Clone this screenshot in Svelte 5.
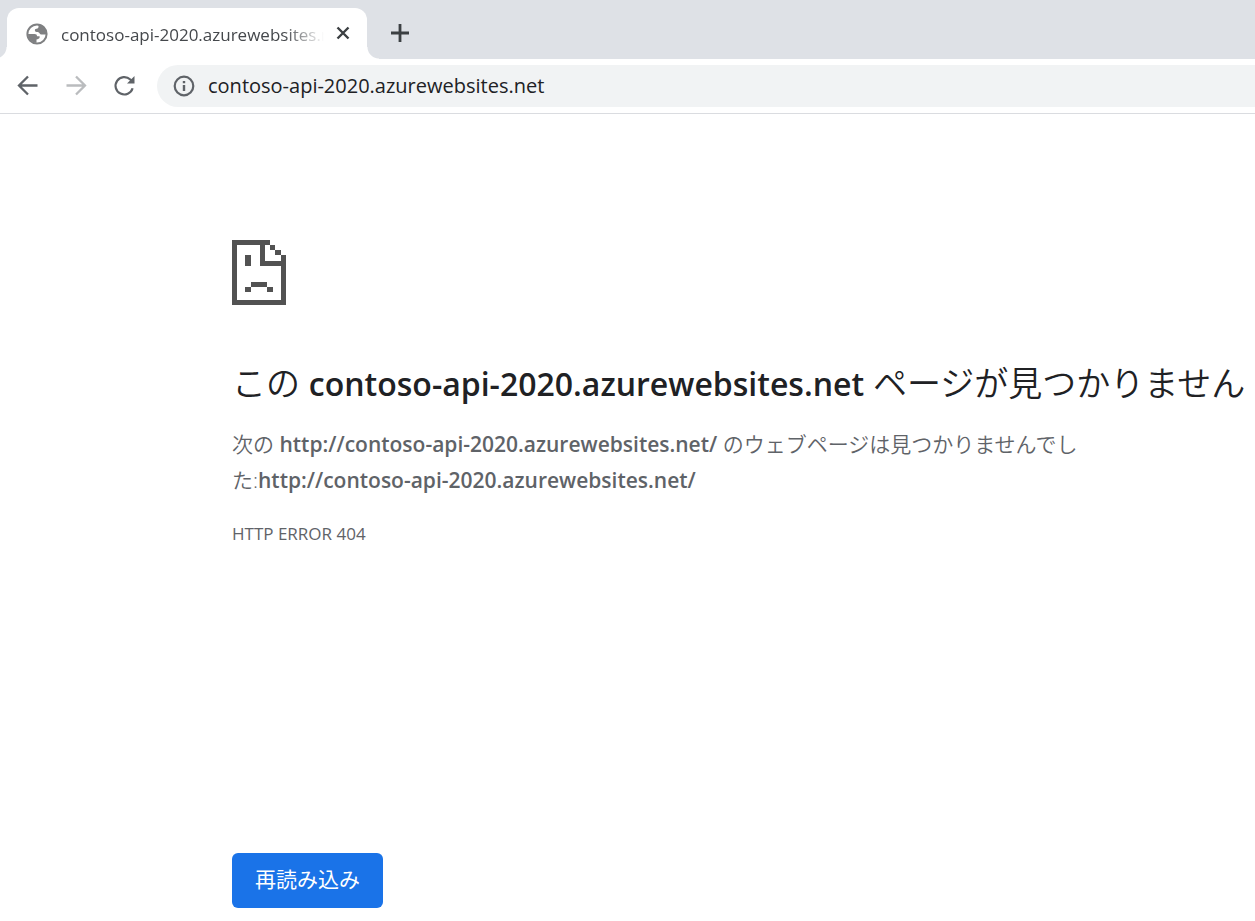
<script>
  const host = 'contoso-api-2020.azurewebsites.net';
  const url = `http://${host}/`;
</script>

<div class="browser">
  <header>
    <div class="tabs">
      <div class="tab">
        <svg class="globe" viewBox="0 0 22 22" fill="#7f8082" aria-hidden="true">
          <circle cx="11" cy="11" r="9.600" fill="#fff" stroke="#7f8082" stroke-width="2" />
          <path d="M2 11h6.500c1.800 0 2.500.9 2.500 2.300h2.600c.4 1.500-.5 2.700-2.100 2.900l-1 .3v3.300C6 20 2 16 2 11z" />
          <path d="M12.500 1.500v2.300c0 1.300-.8 1.900-2 1.900-1.400 0-1.700.8-1.600 1.800.1 1.300 1.200 1.500 3 1.500 1.500 0 1.600 2.600 3.600 2.600h4.700c.3-5-3-9.500-7.700-10.100z" />
        </svg>
        <span class="title">{host}</span>
        <button class="close" aria-label="タブを閉じる">
          <svg viewBox="0 0 14 14"><path d="M1.500 1.500l11 11M12.500 1.500l-11 11" stroke="#3c4043" stroke-width="2.400" /></svg>
        </button>
      </div>
      <button class="new" aria-label="新しいタブ">
        <svg viewBox="0 0 18 18"><path d="M9 0v18M0 9h18" stroke="#3c4043" stroke-width="2.800" /></svg>
      </button>
    </div>
    <nav>
      <button aria-label="戻る">
        <svg viewBox="0 0 24 24" fill="none" stroke="#5f6368" stroke-width="2.300"><path d="M21.500 11.500H3.500M12 2.500l-9 9 9 9" /></svg>
      </button>
      <button aria-label="進む" disabled>
        <svg viewBox="0 0 24 24" fill="none" stroke="#babcbe" stroke-width="2.300"><path d="M2.500 11.500h18M12 2.500l9 9-9 9" /></svg>
      </button>
      <button aria-label="再読み込み">
        <svg viewBox="0 0 24 24"><path d="M20.600 14.200a8.700 8.700 0 1 1-2.300-8.700L21 8" fill="none" stroke="#5f6368" stroke-width="2.200" /><path d="M22.500 2v7.500H15z" fill="#5f6368" /></svg>
      </button>
      <div class="address">
        <svg viewBox="0 0 22 22" aria-hidden="true">
          <circle cx="11" cy="11" r="9.300" fill="none" stroke="#5f6368" stroke-width="2.200" />
          <path d="M11 10v6M11 6v2.200" stroke="#5f6368" stroke-width="2.400" />
        </svg>
        <input aria-label="アドレス" value={host} />
      </div>
    </nav>
  </header>

  <main>
    <svg class="sad" viewBox="0 0 54 65" shape-rendering="crispEdges" aria-hidden="true">
      <path
        fill="#525252"
        d="M0 0H38V5H33V21H49V15H54V65H0ZM5 5V60H49V26H28V5ZM38 5H43V10H38ZM43 10H49V15H43ZM13 15H19V26H13ZM19 42H35V47H19ZM13 47H19V52H13ZM35 47H41V52H35Z"
        fill-rule="evenodd"
      />
    </svg>
    <h1>この <span>{host}</span> ページが見つかりません</h1>
    <p class="summary">次の <strong>{url}</strong> のウェブページは見つかりませんでした:<strong>{url}</strong></p>
    <p class="code">HTTP ERROR 404</p>
    <button class="reload">再読み込み</button>
  </main>
</div>

<style>
  :global(body) {
    margin: 0;
    background: #fff;
  }
  .browser {
    font-family: 'Open Sans', 'Noto Sans CJK JP', sans-serif;
    color: #202124;
  }
  button {
    border: 0;
    padding: 0;
    background: none;
    font: inherit;
  }
  svg {
    display: block;
    flex: none;
  }
  header {
    border-bottom: 1px solid #dadce0;
  }
  .tabs {
    display: flex;
    background: #dee1e6;
    padding: 8px 7px 0;
    height: 51px;
  }
  .tab {
    position: relative;
    display: flex;
    align-items: center;
    box-sizing: border-box;
    width: 360px;
    padding: 0 17px 0 19px;
    background: #fff;
    border-radius: 12px 12px 0 0;
  }
  .tab::before,
  .tab::after {
    content: '';
    position: absolute;
    bottom: 0;
    width: 12px;
    height: 12px;
  }
  .tab::before {
    right: 100%;
    background: radial-gradient(circle at 0 0, #dee1e6 11px, #fff 12px);
  }
  .tab::after {
    left: 100%;
    background: radial-gradient(circle at 100% 0, #dee1e6 11px, #fff 12px);
  }
  .globe {
    width: 22px;
    height: 22px;
  }
  .title {
    flex: 1;
    min-width: 0;
    margin: 2px 12px 0 13px;
    overflow: hidden;
    white-space: nowrap;
    font-size: 17px;
    line-height: 24px;
    color: #45484c;
    mask-image: linear-gradient(to left, transparent, #000 40px);
  }
  .close svg {
    width: 14px;
    height: 14px;
  }
  .close,
  .new {
    padding-bottom: 2px;
  }
  .new {
    margin-left: 24px;
  }
  .new svg {
    width: 18px;
    height: 18px;
  }
  nav {
    display: flex;
    align-items: center;
    gap: 24px;
    padding: 6px 0 6px 16px;
  }
  nav svg {
    width: 24px;
    height: 24px;
  }
  .address {
    flex: 1;
    display: flex;
    align-items: center;
    gap: 13px;
    height: 42px;
    margin-left: -3px;
    padding-left: 16px;
    background: #f1f3f4;
    border-radius: 21px 0 0 21px;
  }
  .address svg {
    width: 22px;
    height: 22px;
  }
  input {
    flex: 1;
    min-width: 0;
    border: 0;
    padding: 0;
    outline: 0;
    background: none;
    color: inherit;
    font: inherit;
    font-size: 20px;
    line-height: 28px;
  }
  main {
    padding: 126px 0 13px 232px;
  }
  .sad {
    width: 54px;
    height: 65px;
  }
  h1 {
    margin: 53px 0 0;
    font-size: 34px;
    font-weight: 350;
    line-height: 50px;
    white-space: nowrap;
  }
  h1 span {
    font-size: 32px;
    font-weight: 550;
    line-height: 1;
  }
  .summary {
    max-width: 870px;
    margin: 18px 0 0;
    font-size: 21px;
    font-weight: 350;
    line-height: 36px;
    color: #5f6368;
  }
  .summary strong {
    font-weight: 650;
    line-height: 1;
  }
  .code {
    margin: 24px 0 0;
    font-size: 17px;
    line-height: 24px;
    color: #5f6368;
  }
  .reload {
    display: block;
    margin-top: 307px;
    padding: 0 23px 5px;
    height: 55px;
    border-radius: 6px;
    background: #1a73e8;
    color: #fff;
    font-size: 21px;
  }
</style>
